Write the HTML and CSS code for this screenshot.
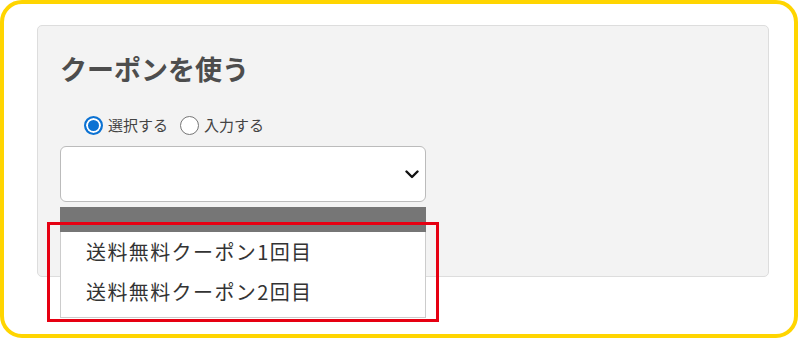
FILE: index.html
```html
<!DOCTYPE html>
<html lang="ja">
	<head>
		<meta charset="utf-8">
		<title>クーポンを使う</title>
		<link rel="stylesheet" href="styles.css">
	</head>
	<body>
		<div class="frame">
			<div class="panel">
				<h1 class="panel-title">クーポンを使う</h1>

				<div class="choice">
					<label class="choice-item">
						<span class="radio is-checked"></span>
						<span class="choice-label">選択する</span>
					</label>
					<label class="choice-item">
						<span class="radio"></span>
						<span class="choice-label">入力する</span>
					</label>
				</div>

				<div class="select-wrap">
					<div class="select">
						<svg class="select-arrow" width="14" height="9" viewBox="0 0 14 9">
							<path d="M1.5 1.5 L7 7 L12.5 1.5" fill="none" stroke="#111" stroke-width="2.4" stroke-linecap="round" stroke-linejoin="round"/>
						</svg>
					</div>

					<!-- opened dropdown -->
					<div class="dropdown">
						<div class="dropdown-head"></div>
						<ul class="dropdown-list">
							<li>送料無料クーポン1回目</li>
							<li>送料無料クーポン2回目</li>
						</ul>
					</div>

					<div class="highlight"></div>
				</div>
			</div><!-- /panel -->
		</div><!-- /frame -->
	</body>
</html>
```

FILE: styles.css
```css
*, *:after, *:before { box-sizing: border-box; }

body {
	margin: 0;
	background: #fff;
	font-family: "Noto Sans CJK JP", "Noto Sans", sans-serif;
	color: #333;
}

/*************************************
Outer frame and panel
**************************************/

.frame {
	width: 798px;
	height: 338px;
	border: 4px solid #ffd500;
	border-radius: 22px;
	padding: 21px 0 0 33px;
}

.panel {
	width: 732px;
	height: 252px;
	border: 1px solid #ddd;
	border-radius: 5px;
	background: #f3f3f3;
	padding: 26px 0 0 22px;
}

.panel-title {
	margin: 0;
	font-size: 27px;
	line-height: 33px;
	font-weight: 700;
	color: #4d4d4d;
}

/*************************************
Radio buttons
**************************************/

.choice {
	display: flex;
	align-items: center;
	gap: 12px;
	margin: 30px 0 0 24px;
	height: 20px;
}

.choice-item {
	display: flex;
	align-items: center;
	gap: 5px;
}

.radio {
	width: 19px;
	height: 19px;
	border-radius: 50%;
	border: 1.5px solid #767676;
	background: #fff;
}

.radio.is-checked {
	border: 2px solid #0b72d3;
	box-shadow: inset 0 0 0 2px #fff;
	background: #0b72d3;
}

.choice-label {
	font-size: 15px;
	line-height: 20px;
	color: #444;
}

/*************************************
Select and opened list
**************************************/

.select-wrap {
	position: relative;
	width: 366px;
	margin-top: 11px;
}

.select {
	height: 56px;
	border: 1px solid #bbb;
	border-radius: 6px;
	background: #fff;
	display: flex;
	align-items: center;
	justify-content: flex-end;
	padding-right: 6px;
}

.dropdown {
	position: absolute;
	top: 61px;
	left: 0;
	width: 366px;
}

.dropdown-head {
	height: 25px;
	background: #767676;
}

.dropdown-list {
	list-style: none;
	margin: 0;
	padding: 0 0 5px;
	background: #fff;
	border: 1px solid #ccc;
	border-top: 0;
}

.dropdown-list li {
	height: 40px;
	line-height: 40px;
	padding-left: 25px;
	font-size: 20px;
	letter-spacing: 1.4px;
	color: #333;
}

.highlight {
	position: absolute;
	top: 76px;
	left: -13px;
	width: 392px;
	height: 100px;
	border: 3px solid #e60012;
}
```
